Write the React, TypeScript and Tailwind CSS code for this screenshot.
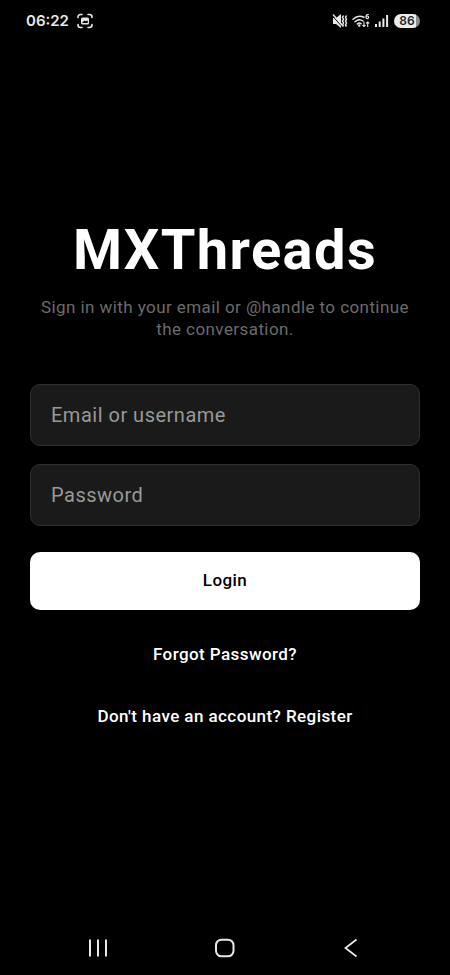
export default function App() {
  return (
    <div className="flex min-h-screen flex-col bg-black font-['Roboto',sans-serif] text-white">
      <header className="flex h-[42px] items-center justify-between pl-[26px] pr-[30px] text-[#e8e8e8]">
        <div className="flex items-center gap-2">
          <span className="font-['Inter',sans-serif] text-[15px] font-semibold leading-5">06:22</span>
          <svg className="h-4 w-4" viewBox="0 0 16 16" fill="none" stroke="currentColor" strokeWidth="1.6" strokeLinecap="round">
            <path d="M1 4.500V4A2.500 2.500 0 0 1 3.500 1.500H5M11 1.500h1.500A2.500 2.500 0 0 1 15 4v.5M15 11.500v.5a2.500 2.500 0 0 1-2.500 2.500H11M5 14.500H3.500A2.500 2.500 0 0 1 1 12v-.5" />
            <path fill="currentColor" stroke="none" fillRule="evenodd" d="M5.500 4.500h5A1.500 1.500 0 0 1 12 6v4a1.500 1.500 0 0 1-1.500 1.500h-5A1.500 1.500 0 0 1 4 10V6a1.500 1.500 0 0 1 1.500-1.500zM5.300 9.500l2.200-2 1 .7L10.700 7.500V10h-5.400z" />
          </svg>
        </div>
        <div className="flex items-center gap-1">
          <svg className="h-4 w-4" viewBox="0 0 16 16" fill="currentColor">
            <path d="M1 5h3l5-4v14l-5-4H1z" />
            <path d="M0 2.500l10 11" stroke="#000" strokeWidth="1" />
            <path d="M1 1.500l10 11.500" stroke="currentColor" strokeWidth="1.400" />
            <path d="M11.500 2.500l-1 1.800 1 1.900-1 1.900 1 1.900-1 1.900 1 1.600M14.500 2.500l-1 1.800 1 1.900-1 1.900 1 1.900-1 1.900 1 1.600" stroke="currentColor" strokeWidth="1.500" fill="none" />
          </svg>
          <svg className="h-4 w-[18px]" viewBox="0 0 18 16" fill="none" stroke="currentColor" strokeWidth="1.500" strokeLinecap="round">
            <path d="M1 6.200Q6 1.500 12 4.200M3 8.700q4-3.700 8-.7M5.300 11q2-1.800 3.800-.2" />
            <circle cx="7.200" cy="12.500" r="1.200" fill="currentColor" stroke="none" />
            <path strokeWidth="1.100" d="M16.500 1.500q-2.500-.5-2.500 2.500M14 4.300a1.300 1.300 0 1 0 2.600 0a1.300 1.300 0 1 0-2.600 0M12 9v4.500M10.800 12.300l1.200 1.200 1.200-1.200M15.700 13.500V9M14.500 10.200L15.700 9l1.200 1.200" />
          </svg>
          <svg className="h-4 w-4" viewBox="0 0 16 16" fill="currentColor">
            <path d="M1 11h2v3H1zM4.700 8.500h2V14h-2zM8.400 5.500h2V14h-2zM12.100 2h2v12h-2z" />
          </svg>
          <span className="flex h-[14px] w-[26px] items-center justify-center rounded-full bg-linear-to-r from-[#ececec] from-85% to-[#8c8c8c] to-85% font-['Inter',sans-serif] text-[12px] font-semibold leading-none text-[#222]">86</span>
        </div>
      </header>
      <main className="flex flex-1 flex-col justify-center px-[30px] pb-[18px]">
        <h1 className="text-center text-[56px] font-bold leading-[64px] tracking-wide">MXThreads</h1>
        <p className="mt-[14px] text-center text-[17px] leading-[22px] tracking-wide text-[#6b6b6b]">Sign in with your email or @handle to continue the conversation.</p>
        <form className="mt-11 flex flex-col" onSubmit={(e) => e.preventDefault()}>
          <input aria-label="Email or username" placeholder="Email or username" className="h-[62px] rounded-[10px] border border-[#303030] bg-[#1a1a1a] px-5 text-[20px] tracking-wide placeholder:text-[#999]" />
          <input type="password" aria-label="Password" placeholder="Password" className="mt-[18px] h-[62px] rounded-[10px] border border-[#303030] bg-[#1a1a1a] px-5 text-[20px] tracking-wide placeholder:text-[#999]" />
          <button className="mt-[26px] h-[58px] rounded-[10px] bg-white text-[17px] font-medium tracking-wide text-black">Login</button>
        </form>
        <a href="#forgot" className="mt-8 self-center text-[17px] font-medium leading-6 tracking-wide">Forgot Password?</a>
        <a href="#register" className="mt-[38px] self-center text-[17px] font-medium leading-6 tracking-wide">Don't have an account? Register</a>
      </main>
      <nav className="flex h-[54px] items-center justify-around px-9 text-[#e8e8e8]">
        <button aria-label="Recent apps"><svg className="h-5 w-5" viewBox="0 0 20 20" stroke="currentColor" strokeWidth="2"><path d="M1 1.500v17M9 1.500v17M17 1.500v17" /></svg></button>
        <button aria-label="Home"><svg className="h-5 w-5" viewBox="0 0 20 20" fill="none" stroke="currentColor" strokeWidth="2"><rect x="1" y="1.700" width="17.500" height="16.600" rx="5.500" /></svg></button>
        <button aria-label="Back"><svg className="h-5 w-5" viewBox="0 0 20 20" fill="none" stroke="currentColor" strokeWidth="1.800"><path d="M15.500 1.500L4.500 10l11 8.500" /></svg></button>
      </nav>
    </div>
  );
}
